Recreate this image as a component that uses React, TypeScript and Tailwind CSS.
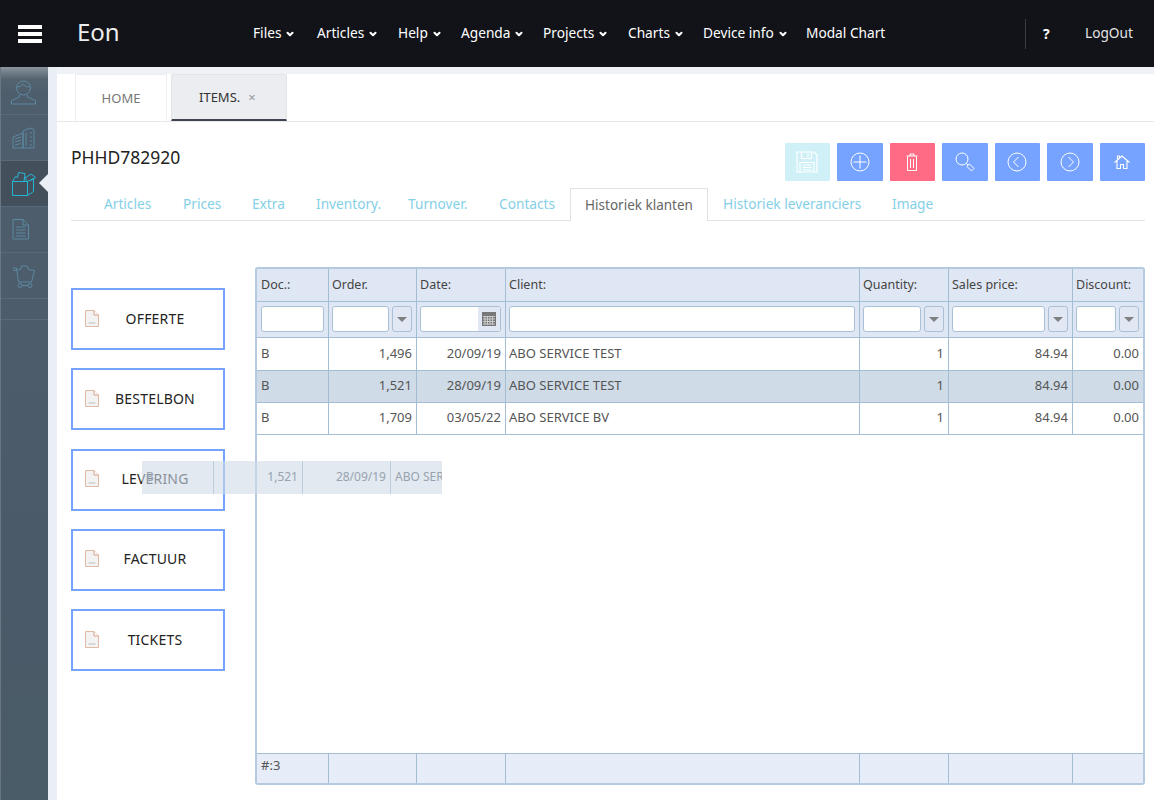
import { ChevronDown } from "lucide-react"

const font = { fontFamily: '"Noto Sans", sans-serif' }

const navItems = [
  { label: "Files", w: "w-[64px]", chevron: true },
  { label: "Articles", w: "w-[81px]", chevron: true },
  { label: "Help", w: "w-[63px]", chevron: true },
  { label: "Agenda", w: "w-[82px]", chevron: true },
  { label: "Projects", w: "w-[85px]", chevron: true },
  { label: "Charts", w: "w-[75px]", chevron: true },
  { label: "Device info", w: "w-[103px]", chevron: true },
  { label: "Modal Chart", w: "w-[90px]", chevron: false },
]

const subTabs = [
  { label: "Articles", w: "w-[79px]" },
  { label: "Prices", w: "w-[69px]" },
  { label: "Extra", w: "w-[64px]" },
  { label: "Inventory.", w: "w-[92px]" },
  { label: "Turnover.", w: "w-[91px]" },
  { label: "Contacts", w: "w-[71px]" },
]

const cols = "grid grid-cols-[72px_88px_89px_354px_89px_124px_70px]"

const rows = [
  { doc: "B", order: "1,496", date: "20/09/19", client: "ABO SERVICE TEST", bg: "bg-white", h: "h-[33px]" },
  { doc: "B", order: "1,521", date: "28/09/19", client: "ABO SERVICE TEST", bg: "bg-[#cfdbe7]", h: "h-[32px]" },
  { doc: "B", order: "1,709", date: "03/05/22", client: "ABO SERVICE BV", bg: "bg-white", h: "h-[32px]" },
]

function SideIcon({ children, active }: { children: React.ReactNode; active?: boolean }) {
  return (
    <svg
      width="28"
      height="28"
      viewBox="0 0 28 28"
      fill="none"
      stroke={active ? "#27b5d4" : "#5f8ea8"}
      strokeWidth="1"
      className={active ? "" : "opacity-90"}
    >
      {children}
    </svg>
  )
}

function DocIcon() {
  return (
    <svg width="16" height="19" viewBox="0 0 16 19" fill="none" className="shrink-0">
      <path d="M1.5 1.5h8.5l4.5 4.5v11.5h-13z" fill="#f3f3f3" stroke="#e2b9a2" />
      <path d="M10 1.5v4.5h4.500" fill="#fff" stroke="#d99f86" />
      <path d="M4.5 14h7" stroke="#bdbdbd" />
    </svg>
  )
}

function SelectArrow() {
  return (
    <div className="w-[20px] h-[26px] shrink-0 rounded-[3px] border border-[#a9c0d6] bg-[#e1e8f4] flex items-center justify-center">
      <div className="w-0 h-0 border-l-[5px] border-r-[5px] border-t-[5px] border-l-transparent border-r-transparent border-t-[#808080]" />
    </div>
  )
}

function FilterInput() {
  return <div className="flex-1 min-w-0 h-[26px] rounded-[3px] border border-[#a9c0d6] bg-white" />
}

function FilterCell({ select, last, first }: { select?: boolean; last?: boolean; first?: boolean }) {
  return (
    <div className={`flex items-center gap-[3px] pr-[4px] pb-[1px] ${first ? "pl-[4px]" : "pl-[3px]"} ${last ? "" : "border-r border-[#a3bdd4]"}`}>
      <FilterInput />
      {select && <SelectArrow />}
    </div>
  )
}

function ActionButton({ children, bg }: { children: React.ReactNode; bg: string }) {
  return <div className={`w-[45.5px] h-[38px] rounded-[1px] flex items-center justify-center ${bg}`}>{children}</div>
}

function CircleIcon({ d }: { d: string }) {
  return (
    <svg width="20" height="20" viewBox="0 0 20 20" fill="none" stroke="#fff" strokeWidth="1">
      <circle cx="10" cy="10" r="9" />
      <path d={d} />
    </svg>
  )
}

export default function App() {
  const sideLine = "border-b border-[#5a6a78]"
  return (
    <div className="w-[1154px] h-[800px] overflow-hidden relative flex flex-col bg-white text-[#333]" style={font}>
      <header className="h-[67px] shrink-0 bg-[#111318] flex items-center text-white">
        <div className="w-[77px] pl-[18px] flex flex-col gap-[3px]">
          <div className="w-[24px] h-[4px] bg-white" />
          <div className="w-[24px] h-[4px] bg-white" />
          <div className="w-[24px] h-[4px] bg-white" />
        </div>
        <div className="w-[176px] pb-[4px] text-[24px] leading-none text-[#eee]">Eon</div>
        <nav className="flex w-[772px] text-[13.7px]">
          {navItems.map((n) => (
            <div key={n.label} className={`${n.w} flex items-center gap-[4px]`}>
              <span>{n.label}</span>
              {n.chevron && <ChevronDown size={10} strokeWidth={5} className="mt-[1px]" />}
            </div>
          ))}
        </nav>
        <div className="h-[30px] w-px bg-[#3a3d45]" />
        <div className="w-[59px] pl-[17px] text-[14px] font-bold">?</div>
        <div className="text-[13.7px] text-[#e4e4e4]">LogOut</div>
      </header>

      <div className="flex-1 flex min-h-0">
        <aside className="w-[48px] shrink-0 border-l border-[#6a7783] bg-[linear-gradient(#46525e,#4e5e6c_48px,#4a5a68_500px,#4b5c69)] flex flex-col">
          <div className={`h-[48px] flex items-center justify-center ${sideLine} bg-[linear-gradient(#8a949d,#55646f_12px,#4e5e6c_24px)]`}>
            <SideIcon>
              <circle cx="12.500" cy="11" r="7" />
              <path d="M5.500 10c3 0 5-1 6.500-3 1 2 3 3 7.500 3" />
              <path d="M8.500 18v2l-8 3.500v3.500h24v-3.500l-8-3.500v-2" />
            </SideIcon>
          </div>
          <div className={`h-[46px] flex items-center justify-center ${sideLine}`}>
            <SideIcon>
              <path d="M2 13l10-4v15h-10zM12 7l7-3 4 1.500v18.500h-11z" />
              <path d="M4 15l6-2M4 18l6-2M4 21l6-1.500M15 9v13M20 8v2M20 12v2M20 16v2M20 20v2" />
            </SideIcon>
          </div>
          <div className={`h-[46px] relative flex items-center justify-center bg-[#434f5a] ${sideLine}`}>
            <SideIcon active>
              <path d="M1.500 11.500h15v14h-15zM16.500 11.500l6-3v13l-6 4" />
              <path d="M1.500 11.500l3-5 2 1 1-5 6.500 1-1 8M16.500 11.500l-2.500-3.500 6-4 4.500 3.500-5 3" />
            </SideIcon>
            <div className="absolute right-0 top-[13px] w-0 h-0 border-y-[9px] border-r-[9px] border-y-transparent border-r-[#eaeef5]" />
          </div>
          <div className={`h-[46px] flex items-center justify-center ${sideLine}`}>
            <SideIcon>
              <path d="M2 3.500h10l5.500 5.500v14h-15.500z" />
              <path d="M12 3.500v5.500h5.500M5 11h9.500M5 14h9.500M5 17h9.500M5 20h9.500" />
            </SideIcon>
          </div>
          <div className={`h-[46px] flex items-center justify-center ${sideLine}`}>
            <SideIcon>
              <path d="M1.500 6h4l2 14h13l3-11.500-6-1-1-3.500h-6l-1 3.500-7.500 1" />
              <circle cx="9" cy="23.500" r="2" />
              <circle cx="19" cy="23.500" r="2" />
              <path d="M11 23.500h6" />
            </SideIcon>
          </div>
          <div className={`h-[21px] ${sideLine}`} />
        </aside>

        <div className="w-[9px] shrink-0 bg-[#eaeef5]" />

        <main className="flex-1 min-w-0 flex flex-col">
          <div className="h-[55px] shrink-0 border-b border-[#e8e8e8] bg-[linear-gradient(#eef1f6,#eef1f6_7px,#fff_7px)] flex items-end pl-[18px] gap-[4px]">
            <div className="w-[92px] h-[47px] border border-b-0 border-[#eeeeee] bg-white flex items-center justify-center pt-[1px] text-[13px] text-[#777]">
              HOME
            </div>
            <div className="w-[116px] h-[47px] rounded-t-[2px] border border-b-0 border-[#e3e4e7] bg-[#ebedf0] border-b-[2px] border-b-[#3e4452] flex items-center pl-[27px] pt-[1px] gap-[8px] text-[13px] text-[#333]">
              ITEMS.
              <span className="text-[13px] text-[#999]">×</span>
            </div>
          </div>

          <div className="flex-1 min-h-0 flex flex-col pl-[14px] pr-[9px]">
            <div className="h-[66px] shrink-0 flex items-start justify-between">
              <div className="pt-[24px] text-[17.5px] leading-[22px] text-[#222]">PHHD782920</div>
              <div className="pt-[21px] flex gap-[7px]">
                <ActionButton bg="bg-[#cff0f7]">
                  <svg width="22" height="22" viewBox="0 0 22 22" fill="none" stroke="#fff" strokeWidth="1.2">
                    <path d="M1 1h17l3 3v17h-20z" />
                    <path d="M5.500 1v6.500h10v-6.500M12 2.500v3.500M4 21v-9.500h14v9.500M6.500 14h9M6.500 16.500h9M6.500 19h9" />
                  </svg>
                </ActionButton>
                <ActionButton bg="bg-[#75a3ff]">
                  <CircleIcon d="M10 3.500v13M3.500 10h13" />
                </ActionButton>
                <ActionButton bg="bg-[#ff6b84]">
                  <svg width="12" height="18" viewBox="0 0 12 18" fill="none" stroke="#fff" strokeWidth="1">
                    <path d="M4 3v-2h4v2M0.500 3h11M1.500 3.500v14h9v-14M4.500 6v9M7.500 6v9" />
                  </svg>
                </ActionButton>
                <ActionButton bg="bg-[#75a3ff]">
                  <svg width="20" height="20" viewBox="0 0 20 20" fill="none" stroke="#fff" strokeWidth="1">
                    <circle cx="7" cy="7" r="6" />
                    <path d="M11.500 11.500l1.500 1.500M13 13l-1 1.500 4.500 4.500 2.500-2.500-4.500-4.500z" />
                  </svg>
                </ActionButton>
                <ActionButton bg="bg-[#75a3ff]">
                  <CircleIcon d="M11.500 5l-5 5 5 5" />
                </ActionButton>
                <ActionButton bg="bg-[#75a3ff]">
                  <CircleIcon d="M8.500 5l5 5-5 5" />
                </ActionButton>
                <ActionButton bg="bg-[#75a3ff]">
                  <svg width="16" height="14" viewBox="0 0 16 14" fill="none" stroke="#fff" strokeWidth="1.1">
                    <path d="M0.500 7.500l7.500-6.500 7.500 6.500M3 6v7.500h3.500v-4h3v4h3.500v-7.500M3.500 4v-3h2v1.500" />
                  </svg>
                </ActionButton>
              </div>
            </div>

            <div className="h-[33px] shrink-0 border-b border-[#e2e2e2] flex items-stretch pl-[33px] text-[13.7px] text-[#84d0e6]">
              {subTabs.map((t) => (
                <div key={t.label} className={`${t.w} flex items-center`}>
                  {t.label}
                </div>
              ))}
              <div className="w-[138px] h-[33px] border border-b-0 border-[#e2e2e2] bg-white flex items-center justify-center text-[13.5px] text-[#666]">
                Historiek klanten
              </div>
              <div className="w-[169px] pl-[15px] flex items-center">Historiek leveranciers</div>
              <div className="pl-[15px] flex items-center">Image</div>
            </div>

            <div className="flex-1 min-h-0 flex">
              <div className="w-[184px] shrink-0 pt-[67px] flex flex-col gap-[18.25px]">
                {["OFFERTE", "BESTELBON", "LEVERING", "FACTUUR", "TICKETS"].map((b) => (
                  <div key={b} className="w-[154px] h-[62px] border-2 border-[#75a3ff] bg-white flex items-center pl-[11px] pb-[2px] text-[14px] tracking-[0.2px] text-[#222]">
                    <DocIcon />
                    <span className="flex-1 text-center pr-[13px]">{b}</span>
                  </div>
                ))}
              </div>

              <div className="w-[890px] h-[518px] mt-[46px] border-2 border-[#b5cade] rounded-[3px] flex flex-col text-[13px] text-[#555]">
                <div className={`${cols} h-[33px] shrink-0 bg-[#e0e7f4] border-b border-[#a3bdd4] text-[12.5px] text-[#444]`}>
                  {["Doc.:", "Order.", "Date:", "Client:", "Quantity:", "Sales price:", "Discount:"].map((h, i) => (
                    <div key={h} className={`flex items-center pr-[4px] ${i === 0 ? "pl-[4px]" : "pl-[3px]"} ${i < 6 ? "border-r border-[#a3bdd4]" : ""}`}>
                      {h}
                    </div>
                  ))}
                </div>
                <div className={`${cols} h-[36px] shrink-0 bg-[#e0e7f4] border-b border-[#a3bdd4]`}>
                  <FilterCell first />
                  <FilterCell select />
                  <div className="flex items-center pl-[3px] pr-[4px] pb-[1px] border-r border-[#a3bdd4]">
                    <div className="flex-1 h-[26px] rounded-[3px] border border-[#a9c0d6] bg-white flex justify-end overflow-hidden">
                      <div className="w-[22px] bg-[#e1e8f4] flex items-center justify-center">
                        <svg width="14" height="14" viewBox="0 0 14 14">
                          <rect width="14" height="14" fill="#777" />
                          <path d="M1 4.500h12M1 7h12M1 9.500h12M1 12h12M3 4v9M5.500 4v9M8 4v9M10.500 4v9" stroke="#ccc" strokeWidth="1" />
                        </svg>
                      </div>
                    </div>
                  </div>
                  <FilterCell />
                  <FilterCell select />
                  <FilterCell select />
                  <FilterCell select last />
                </div>
                {rows.map((r) => (
                  <div key={r.order} className={`${cols} ${r.h} shrink-0 ${r.bg} border-b border-[#a3bdd4]`}>
                    <div className="flex items-center pl-[4px] pb-[1px] border-r border-[#a3bdd4]">{r.doc}</div>
                    <div className="flex items-center justify-end pr-[4px] pb-[1px] border-r border-[#a3bdd4]">{r.order}</div>
                    <div className="flex items-center justify-end pr-[4px] pb-[1px] border-r border-[#a3bdd4]">{r.date}</div>
                    <div className="flex items-center pl-[3px] pb-[1px] border-r border-[#a3bdd4]">{r.client}</div>
                    <div className="flex items-center justify-end pr-[4px] pb-[1px] border-r border-[#a3bdd4]">1</div>
                    <div className="flex items-center justify-end pr-[4px] pb-[1px] border-r border-[#a3bdd4]">84.94</div>
                    <div className="flex items-center justify-end pr-[4px] pb-[1px]">0.00</div>
                  </div>
                ))}
                <div className="flex-1 bg-white" />
                <div className={`${cols} h-[30px] shrink-0 bg-[#e6edf8] border-t border-[#a3bdd4]`}>
                  <div className="px-[4px] pt-[2px] border-r border-[#a3bdd4]">#:3</div>
                  <div className="border-r border-[#a3bdd4]" />
                  <div className="border-r border-[#a3bdd4]" />
                  <div className="border-r border-[#a3bdd4]" />
                  <div className="border-r border-[#a3bdd4]" />
                  <div className="border-r border-[#a3bdd4]" />
                  <div />
                </div>
              </div>
            </div>
          </div>
        </main>
      </div>

      {/* row being dragged */}
      <div className="absolute left-[142px] top-[461px] w-[300px] h-[33px] overflow-hidden flex bg-[#cfdbe7]/60 text-[12px] text-[#98a3ae]">
        <div className="w-[72px] shrink-0 border-r border-[#bccddc] flex items-center pl-[4px] pb-[1px]">B</div>
        <div className="w-[89px] shrink-0 border-r border-[#bccddc] flex items-center justify-end pr-[4px] pb-[1px]">1,521</div>
        <div className="w-[88px] shrink-0 border-r border-[#bccddc] flex items-center justify-end pr-[4px] pb-[1px]">28/09/19</div>
        <div className="w-[51px] shrink-0 flex items-center pl-[4px] pb-[1px] whitespace-nowrap overflow-hidden">ABO SERVICE TEST</div>
      </div>
    </div>
  )
}
